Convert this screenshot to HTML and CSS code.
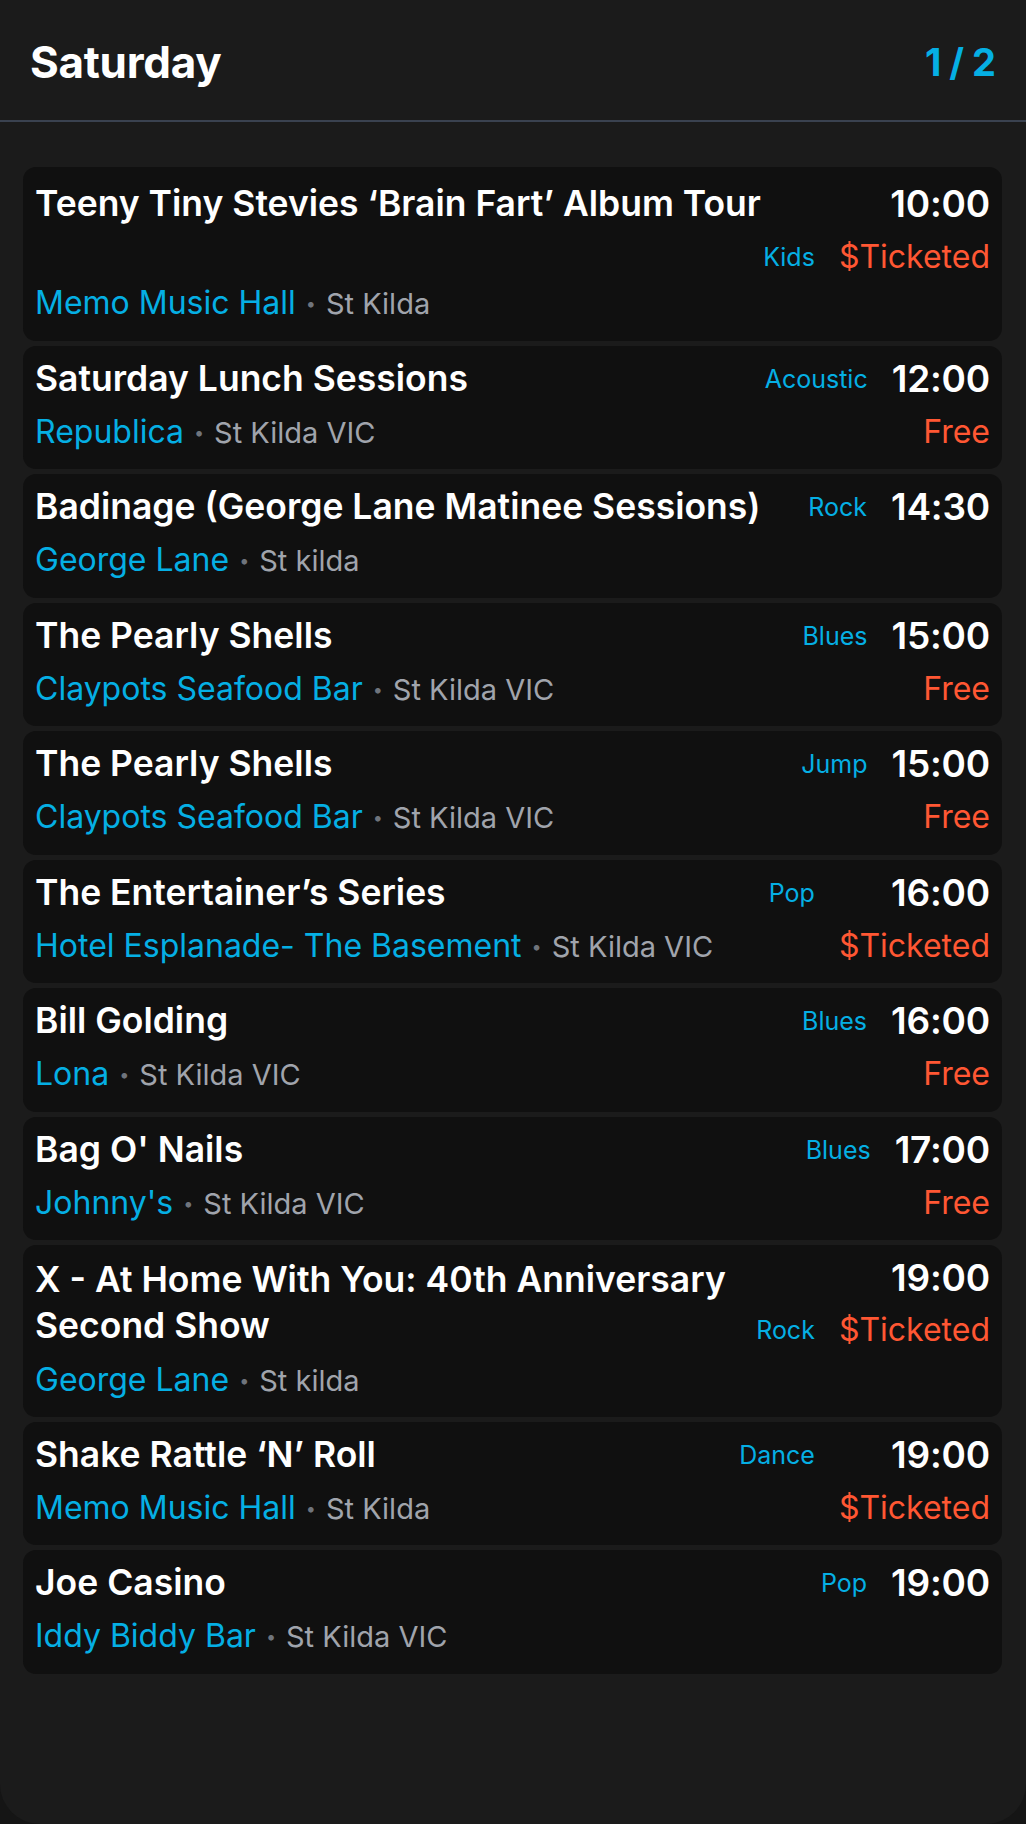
FILE: index.html
```html
<!DOCTYPE html>
<html lang="en">
<head>
<meta charset="utf-8">
<title>Saturday</title>
<link rel="stylesheet" href="styles.css">
</head>
<body>
<div class="screen">
  <header class="topbar">
    <h1 class="day">Saturday</h1>
    <div class="pager">1 / 2</div>
  </header>
  <main class="list">
    <article class="gig gig--long">
      <div class="title">Teeny Tiny Stevies ‘Brain Fart’ Album Tour</div>
      <div class="cat">Kids</div>
      <div class="time">10:00</div>
      <div class="venue"><span class="place">Memo Music Hall</span><span class="dot">•</span><span class="suburb">St Kilda</span></div>
      <div class="price">$Ticketed</div>
    </article>
    <article class="gig">
      <div class="title">Saturday Lunch Sessions</div>
      <div class="cat">Acoustic</div>
      <div class="time">12:00</div>
      <div class="venue"><span class="place">Republica</span><span class="dot">•</span><span class="suburb">St Kilda VIC</span></div>
      <div class="price">Free</div>
    </article>
    <article class="gig">
      <div class="title">Badinage (George Lane Matinee Sessions)</div>
      <div class="cat">Rock</div>
      <div class="time">14:30</div>
      <div class="venue"><span class="place">George Lane</span><span class="dot">•</span><span class="suburb">St kilda</span></div>
    </article>
    <article class="gig">
      <div class="title">The Pearly Shells</div>
      <div class="cat">Blues</div>
      <div class="time">15:00</div>
      <div class="venue"><span class="place">Claypots Seafood Bar</span><span class="dot">•</span><span class="suburb">St Kilda VIC</span></div>
      <div class="price">Free</div>
    </article>
    <article class="gig">
      <div class="title">The Pearly Shells</div>
      <div class="cat">Jump</div>
      <div class="time">15:00</div>
      <div class="venue"><span class="place">Claypots Seafood Bar</span><span class="dot">•</span><span class="suburb">St Kilda VIC</span></div>
      <div class="price">Free</div>
    </article>
    <article class="gig">
      <div class="title">The Entertainer’s Series</div>
      <div class="cat">Pop</div>
      <div class="time">16:00</div>
      <div class="venue"><span class="place">Hotel Esplanade- The Basement</span><span class="dot">•</span><span class="suburb">St Kilda VIC</span></div>
      <div class="price">$Ticketed</div>
    </article>
    <article class="gig">
      <div class="title">Bill Golding</div>
      <div class="cat">Blues</div>
      <div class="time">16:00</div>
      <div class="venue"><span class="place">Lona</span><span class="dot">•</span><span class="suburb">St Kilda VIC</span></div>
      <div class="price">Free</div>
    </article>
    <article class="gig">
      <div class="title">Bag O' Nails</div>
      <div class="cat">Blues</div>
      <div class="time">17:00</div>
      <div class="venue"><span class="place">Johnny's</span><span class="dot">•</span><span class="suburb">St Kilda VIC</span></div>
      <div class="price">Free</div>
    </article>
    <article class="gig gig--wrap">
      <div class="title">X - At Home With You: 40th Anniversary Second Show</div>
      <div class="cat">Rock</div>
      <div class="time">19:00</div>
      <div class="venue"><span class="place">George Lane</span><span class="dot">•</span><span class="suburb">St kilda</span></div>
      <div class="price">$Ticketed</div>
    </article>
    <article class="gig">
      <div class="title">Shake Rattle ‘N’ Roll</div>
      <div class="cat">Dance</div>
      <div class="time">19:00</div>
      <div class="venue"><span class="place">Memo Music Hall</span><span class="dot">•</span><span class="suburb">St Kilda</span></div>
      <div class="price">$Ticketed</div>
    </article>
    <article class="gig">
      <div class="title">Joe Casino</div>
      <div class="cat">Pop</div>
      <div class="time">19:00</div>
      <div class="venue"><span class="place">Iddy Biddy Bar</span><span class="dot">•</span><span class="suburb">St Kilda VIC</span></div>
    </article>
  </main>
</div>
</body>
</html>
```

FILE: styles.css
```css
* { box-sizing: border-box; }

html, body {
  margin: 0;
  padding: 0;
  background: #151515;
}

body {
  font-family: Inter, "Noto Sans", "Liberation Sans", sans-serif;
  color: #ffffff;
}

.screen {
  height: 1824px;
  background: #1b1b1b;
  border-radius: 0 0 40px 40px;
  overflow: hidden;
}

.topbar {
  display: flex;
  justify-content: space-between;
  align-items: center;
  padding: 36px 30px 31px 30px;
  border-bottom: 2px solid #3a4250;
}

.day {
  margin: 0;
  font-size: 44px;
  line-height: 53px;
  font-weight: 700;
  letter-spacing: -0.3px;
}

.pager {
  font-size: 38px;
  line-height: 46px;
  font-weight: 700;
  color: #05afe4;
  word-spacing: -1px;
  margin-top: -2px;
}

.list {
  display: flex;
  flex-direction: column;
  gap: 5px;
  padding: 45px 24px 0 23px;
}

.gig {
  display: grid;
  grid-template-columns: 1fr auto auto;
  grid-template-areas:
    "title cat time"
    "venue venue price";
  column-gap: 24px;
  row-gap: 10px;
  align-items: center;
  background: #101010;
  border-radius: 13px;
  padding: 10px 12px 17.5px 12px;
}

.gig--long {
  padding-top: 14px;
  grid-template-areas:
    "title title time"
    ".     cat   price"
    "venue venue venue";
}

.gig--long .venue {
  margin-top: -4px;
}

.gig--wrap {
  padding-top: 11px;
  padding-bottom: 16.5px;
  grid-template-areas:
    "title .   time"
    "title cat price"
    "venue venue venue";
}

.title {
  grid-area: title;
  font-size: 35.5px;
  line-height: 46px;
  font-weight: 600;
}

.cat {
  grid-area: cat;
  font-size: 25px;
  line-height: 36px;
  color: #05afe4;
  justify-self: end;
}

.time {
  grid-area: time;
  font-size: 37px;
  line-height: 44px;
  font-weight: 600;
  justify-self: end;
  letter-spacing: -0.2px;
}

.venue {
  grid-area: venue;
  font-size: 32px;
  line-height: 40px;
  white-space: nowrap;
}

.place {
  color: #05afe4;
}

.dot {
  color: #6f747c;
  font-size: 18px;
  line-height: 1;
  margin: 0 10px;
  vertical-align: 4px;
}

.suburb {
  color: #a0a4ac;
  font-size: 29px;
  line-height: 1;
}

.price {
  grid-area: price;
  font-size: 32px;
  line-height: 40px;
  color: #ff5733;
  justify-self: end;
}
```
